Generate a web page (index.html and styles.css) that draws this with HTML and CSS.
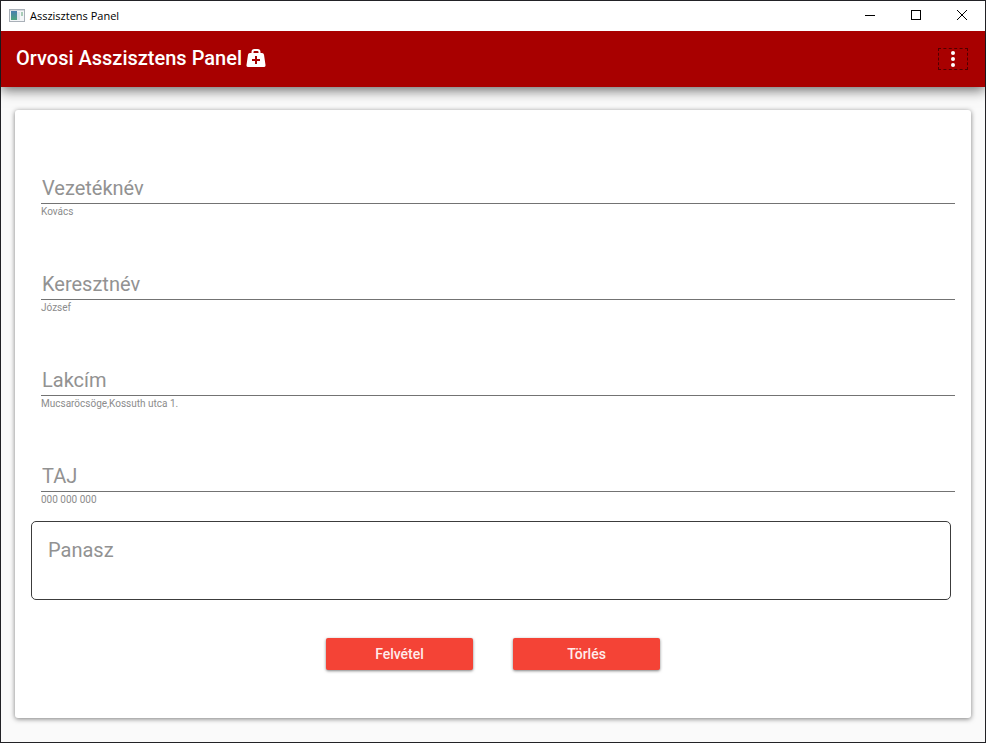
FILE: index.html
```html
<!DOCTYPE html>
<html lang="hu">
<head>
<meta charset="utf-8">
<title>Asszisztens Panel</title>
<link rel="stylesheet" href="styles.css">
</head>
<body>
<div class="window">
  <div class="titlebar">
    <svg class="titlebar-icon" width="16" height="14" viewBox="0 0 16 14" aria-hidden="true">
      <defs>
        <linearGradient id="pane" x1="0" y1="0" x2="0" y2="1">
          <stop offset="0" stop-color="#4a7fb0"/>
          <stop offset="1" stop-color="#4fa47c"/>
        </linearGradient>
      </defs>
      <rect x="0.5" y="0.5" width="15" height="12" fill="#f4f6f8" stroke="#a9b0b8"/>
      <rect x="1" y="1" width="14" height="1" fill="#d5dade"/>
      <rect x="2" y="2" width="6" height="9" fill="url(#pane)"/>
      <rect x="8" y="3" width="3" height="8" fill="#dfe4ea"/>
      <rect x="12" y="3" width="2" height="4" fill="#a9cdb8"/>
    </svg>
    <span class="titlebar-text">Asszisztens Panel</span>
    <button class="caption-button" type="button" aria-label="Kis méret">
      <svg width="12" height="12" viewBox="0 0 12 12"><path d="M1 5.500h10" stroke="#000" fill="none"/></svg>
    </button>
    <button class="caption-button" type="button" aria-label="Teljes méret">
      <svg width="12" height="12" viewBox="0 0 12 12"><rect x="1.500" y="0.500" width="9" height="9" stroke="#000" fill="none"/></svg>
    </button>
    <button class="caption-button" type="button" aria-label="Bezárás">
      <svg width="12" height="12" viewBox="0 0 12 12"><path d="M1 0l10 10M11 0L1 10" stroke="#000" fill="none"/></svg>
    </button>
  </div>

  <header class="appbar">
    <div class="brand">
      <h1 class="appbar-title">Orvosi Asszisztens Panel</h1>
      <svg class="appbar-icon" width="20" height="18" viewBox="0 0 20 18" aria-hidden="true">
        <path fill="#fff" fill-rule="evenodd" d="M8.500 0h3a3 3 0 0 1 3 3v1H16a2 2 0 0 1 2 1.700L19.500 16a1.800 1.800 0 0 1-1.800 2H2.300a1.800 1.800 0 0 1-1.800-2L2 5.700A2 2 0 0 1 4 4H5.500V3a3 3 0 0 1 3-3zM8.500 2a1 1 0 0 0-1 1v1h5V3a1 1 0 0 0-1-1zM9 7v3H6v2h3v3h2v-3h3v-2h-3V7z"/>
      </svg>
    </div>
    <button class="menu-button" type="button" aria-label="Menü">
      <svg width="4" height="16" viewBox="0 0 4 16"><g fill="#fff"><circle cx="2" cy="2" r="2"/><circle cx="2" cy="8" r="2"/><circle cx="2" cy="14" r="2"/></g></svg>
    </button>
  </header>

  <main class="content">
    <form class="card">
      <div class="fields">
        <div class="field">
          <input class="field-input" id="lastname" type="text" placeholder="Vezetéknév" aria-label="Vezetéknév" aria-describedby="lastname-hint">
          <span class="field-hint" id="lastname-hint">Kovács</span>
        </div>
        <div class="field">
          <input class="field-input" id="firstname" type="text" placeholder="Keresztnév" aria-label="Keresztnév" aria-describedby="firstname-hint">
          <span class="field-hint" id="firstname-hint">József</span>
        </div>
        <div class="field">
          <input class="field-input" id="address" type="text" placeholder="Lakcím" aria-label="Lakcím" aria-describedby="address-hint">
          <span class="field-hint" id="address-hint">Mucsaröcsöge,Kossuth utca 1.</span>
        </div>
        <div class="field">
          <input class="field-input" id="taj" type="text" placeholder="TAJ" aria-label="TAJ" aria-describedby="taj-hint">
          <span class="field-hint" id="taj-hint">000 000 000</span>
        </div>
      </div>
      <textarea class="complaint" rows="2" placeholder="Panasz" aria-label="Panasz"></textarea>
      <div class="actions">
        <button class="action" type="button">Felvétel</button>
        <button class="action" type="button">Törlés</button>
      </div>
    </form>
  </main>
</div>
</body>
</html>
```
FILE: styles.css
```css
* {
  box-sizing: border-box;
}

body {
  margin: 0;
  font-family: Roboto, "Liberation Sans", sans-serif;
}

button,
input,
textarea {
  font-family: inherit;
}

.window {
  display: flex;
  flex-direction: column;
  min-height: 100vh;
  border: 1px solid #222226;
  background: #fafafa;
}

.titlebar {
  position: relative;
  z-index: 1;
  display: flex;
  align-items: center;
  height: 30px;
  padding-left: 8px;
  background: #fff;
}

.titlebar-text {
  flex: 1;
  margin-left: 5px;
  font: 11px/16px "Segoe UI", "Open Sans", sans-serif;
  color: #000;
}

.caption-button {
  display: flex;
  align-items: center;
  justify-content: center;
  width: 46px;
  height: 30px;
  padding: 0;
  border: 0;
  background: none;
}

.appbar {
  display: flex;
  align-items: center;
  justify-content: space-between;
  height: 56px;
  padding: 0 17px 0 15px;
  background: #a80000;
  box-shadow: 0 3px 12px rgba(0, 0, 0, 0.6);
}

.brand {
  display: flex;
  align-items: center;
  gap: 4px;
  padding-bottom: 2px;
}

.appbar-title {
  margin: 0;
  font-size: 20px;
  line-height: 24px;
  font-weight: 500;
  color: #fff;
}

.menu-button {
  display: flex;
  align-items: center;
  justify-content: center;
  width: 30px;
  height: 22px;
  padding: 0;
  border: 1px dashed #500000;
  background: none;
}

.content {
  padding: 23px 14px 24px;
}

.card {
  padding: 62px 16px 48px;
  border-radius: 3px;
  background: #fff;
  box-shadow: 0 1px 5px rgba(0, 0, 0, 0.5);
}

.fields {
  display: grid;
  gap: 48px;
  padding-left: 10px;
}

.field {
  display: flex;
  flex-direction: column;
}

.field-input {
  width: 100%;
  height: 32px;
  padding: 0 1px;
  border: 0;
  border-bottom: 1px solid #737373;
  background: none;
  font-size: 20px;
  color: #222;
}

.field-input::placeholder,
.complaint::placeholder {
  color: #929292;
  opacity: 1;
}

.field-hint {
  font-size: 10px;
  line-height: 16px;
  color: #8c8c8c;
}

.complaint {
  display: block;
  width: calc(100% - 4px);
  height: 79px;
  margin-top: 13px;
  padding: 16px;
  border: 1px solid #3c3c3c;
  border-radius: 5px;
  background: none;
  font-size: 20px;
  line-height: 24px;
  color: #222;
  resize: none;
}

.actions {
  display: flex;
  justify-content: center;
  gap: 40px;
  margin-top: 38px;
}

.action {
  width: 147px;
  height: 32px;
  padding: 0;
  border: 0;
  border-radius: 2px;
  background: #f44336;
  box-shadow: 0 1px 3px rgba(0, 0, 0, 0.5);
  font-size: 14px;
  font-weight: 500;
  color: #ffeceb;
}
```
